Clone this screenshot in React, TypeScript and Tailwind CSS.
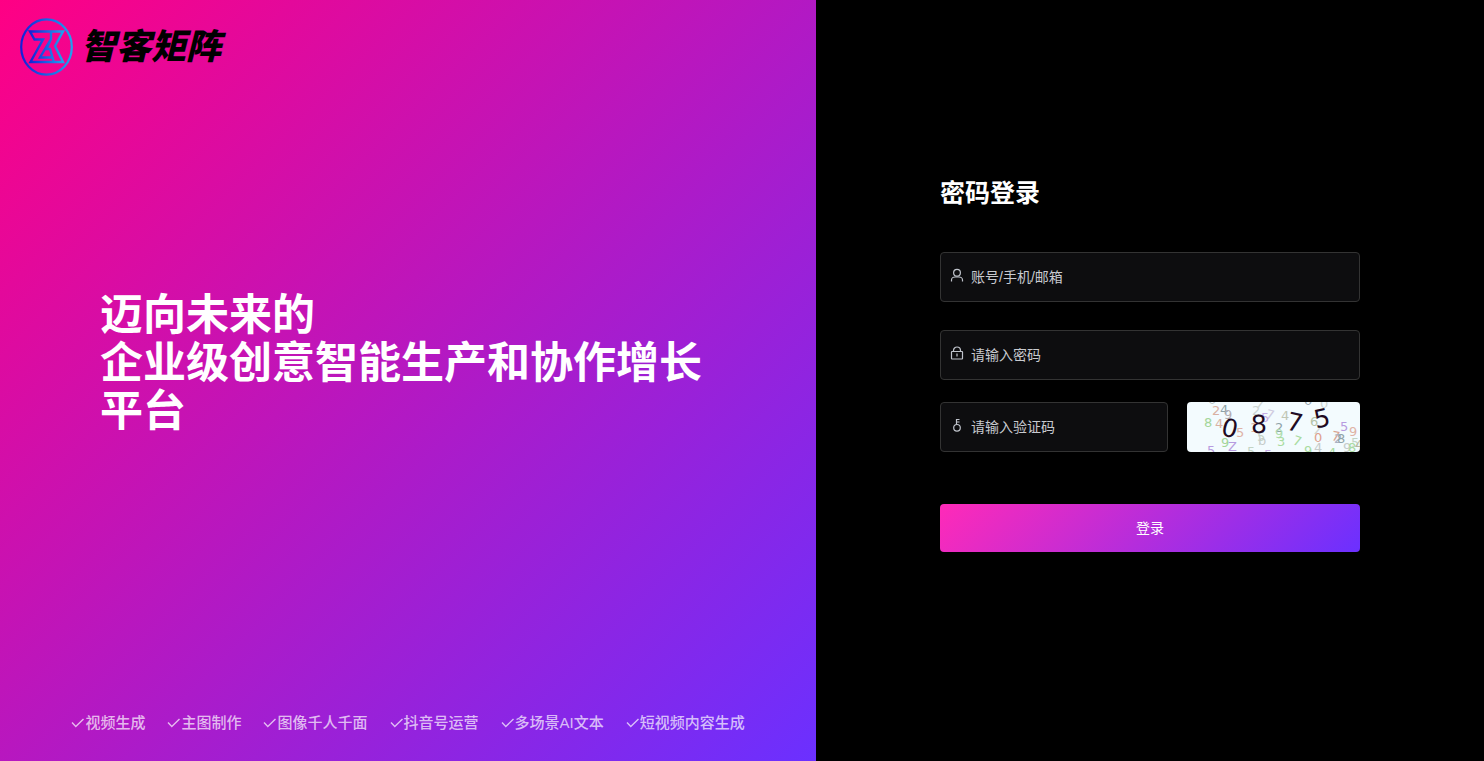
import type { InputHTMLAttributes, ReactNode } from "react";

type Glyph = { char: string; x: number; y: number; fill?: string; rotate?: number };

const FEATURES = [
  "视频生成",
  "主图制作",
  "图像千人千面",
  "抖音号运营",
  "多场景AI文本",
  "短视频内容生成",
];

const NOISE: Glyph[] = [
  { char: "0", x: 21, y: 2, fill: "#b9c4c6" },
  { char: "2", x: 25, y: 13, fill: "#d9b0a2" },
  { char: "4", x: 33, y: 12, fill: "#8fa3a8" },
  { char: "9", x: 37, y: 17, fill: "#b3aeb4" },
  { char: "8", x: 17, y: 25, fill: "#a3d69a" },
  { char: "4", x: 28, y: 26, fill: "#d9b0a2" },
  { char: "5", x: 49, y: 35, fill: "#dfb3a6" },
  { char: "9", x: 34, y: 45, fill: "#a3d69a" },
  { char: "Z", x: 41, y: 49, fill: "#b79be0" },
  { char: "5", x: 20, y: 53, fill: "#b79be0" },
  { char: "2", x: 65, y: 13, fill: "#c9d3d3" },
  { char: "7", x: 78, y: 16, fill: "#cfcbe0", rotate: 15 },
  { char: "5", x: 74, y: 20, fill: "#c6aee6" },
  { char: "7", x: 68, y: 5, fill: "#d0d6d3", rotate: 15 },
  { char: "1", x: 63, y: 30, fill: "#dfb3a6" },
  { char: "5", x: 70, y: 39, fill: "#c3d4c4" },
  { char: "b", x: 71, y: 43, fill: "#c6ccca" },
  { char: "2", x: 88, y: 30, fill: "#8fa3a8" },
  { char: "9", x: 88, y: 36, fill: "#b0deb0" },
  { char: "3", x: 90, y: 44, fill: "#a9dca0" },
  { char: "4", x: 94, y: 18, fill: "#c0c6b4" },
  { char: "7", x: 105, y: 42, fill: "#a9dca0", rotate: 18 },
  { char: "5", x: 60, y: 54, fill: "#c3d4c4" },
  { char: "5", x: 77, y: 57, fill: "#c6aee6" },
  { char: "9", x: 117, y: 53, fill: "#a9dca0" },
  { char: "4", x: 127, y: 50, fill: "#c6ccca" },
  { char: "6", x: 123, y: 24, fill: "#b4c3a6" },
  { char: "7", x: 125, y: 31, fill: "#d0d6d3", rotate: 18 },
  { char: "0", x: 117, y: 3, fill: "#9aa8b0" },
  { char: "0", x: 133, y: 6, fill: "#cdd5d3" },
  { char: "0", x: 127, y: 40, fill: "#dfa08c" },
  { char: "7", x: 144, y: 38, fill: "#d9a490", rotate: 10 },
  { char: "2", x: 147, y: 41, fill: "#aab2c4" },
  { char: "8", x: 150, y: 41, fill: "#8fa3a8" },
  { char: "5", x: 153, y: 29, fill: "#b79be0" },
  { char: "9", x: 162, y: 34, fill: "#dfb3a6" },
  { char: "4", x: 141, y: 55, fill: "#a9dca0" },
  { char: "9", x: 156, y: 50, fill: "#c6ccca" },
  { char: "8", x: 161, y: 50, fill: "#a9dca0" },
  { char: "5", x: 164, y: 45, fill: "#c3d4c4" },
  { char: "4", x: 168, y: 47, fill: "#b9b6a0" },
];

// x and y are the centre of each digit
const CODE: Glyph[] = [
  { char: "0", x: 43, y: 26, rotate: 14 },
  { char: "8", x: 72, y: 22, rotate: -2 },
  { char: "7", x: 108, y: 20, rotate: 12 },
  { char: "5", x: 135, y: 16, rotate: -12 },
];

function Logo() {
  return (
    <div className="flex items-center gap-2">
      <svg viewBox="0 0 53 58" className="h-[58px] w-[53px]" fill="none" aria-hidden="true">
        <defs>
          <linearGradient id="logo-ring" x1="0" y1="0" x2="1" y2="0">
            <stop offset="0" stopColor="#1420d8" />
            <stop offset="1" stopColor="#1fa2f0" />
          </linearGradient>
        </defs>
        <ellipse cx="26.5" cy="29" rx="25.3" ry="27.6" stroke="url(#logo-ring)" strokeWidth="2.2" />
        <path
          d="M10 13.5H43L35 28L43 44H10.5L23 21.5H14.5ZM31 14V21L20 39.500H32M31 21L26.500 31H30L33.500 43"
          stroke="url(#logo-ring)"
          strokeWidth="2.4"
        />
      </svg>
      <span className="text-[35px] leading-[48px] font-black text-black italic">智客矩阵</span>
    </div>
  );
}

function CheckIcon() {
  return (
    <svg viewBox="0 0 14 14" className="size-[14px]" fill="none" stroke="currentColor" aria-hidden="true">
      <path d="M1 6.5L4.8 10.5L12.5 3" strokeWidth="1.4" />
    </svg>
  );
}

function UserIcon() {
  return (
    <svg viewBox="0 0 14 14" className="mb-1 size-[14px]" fill="none" stroke="currentColor" strokeWidth="1.2" aria-hidden="true">
      <circle cx="7" cy="4.7" r="3.4" />
      <path d="M1.5 13.5V12C1.5 10 3.5 9 5 9H9C10.5 9 12.5 10 12.5 12V13.5" />
    </svg>
  );
}

function LockIcon() {
  return (
    <svg viewBox="0 0 14 14" className="mb-1 size-[14px]" fill="none" stroke="currentColor" strokeWidth="1.2" aria-hidden="true">
      <rect x="1.5" y="5.5" width="11" height="7.5" rx="0.5" />
      <path d="M3.5 5.5V4.5A3.5 3.5 0 0 1 10.5 4.5V5.5M7 7.5V10.5" />
    </svg>
  );
}

function KeyIcon() {
  return (
    <svg viewBox="0 0 14 14" className="mb-1 size-[14px]" fill="none" stroke="currentColor" strokeWidth="1.2" aria-hidden="true">
      <circle cx="7" cy="9.8" r="3.3" />
      <path d="M6.5 6.5V1.5H9.5M6.5 4H9.5" />
    </svg>
  );
}

function Captcha() {
  return (
    <svg viewBox="0 0 173 50" className="h-[50px] w-full" role="img" aria-label="验证码">
      <rect width="173" height="50" fill="#f3fbfe" />
      <g fontSize="13" className="font-['DejaVu_Sans',sans-serif]">
        {NOISE.map((g, i) => (
          <text key={i} x={g.x} y={g.y} fill={g.fill} transform={`rotate(${g.rotate ?? 0} ${g.x} ${g.y})`}>
            {g.char}
          </text>
        ))}
      </g>
      <g fontSize="25" fill="#210a22" textAnchor="middle" className="font-['DejaVu_Sans',sans-serif]">
        {CODE.map((g) => (
          <text key={g.char} x={g.x} y={g.y + 9} transform={`rotate(${g.rotate} ${g.x} ${g.y})`}>
            {g.char}
          </text>
        ))}
      </g>
    </svg>
  );
}

function Field(props: InputHTMLAttributes<HTMLInputElement> & { icon: ReactNode }) {
  const { icon, ...input } = props;
  return (
    <label className="flex h-[50px] items-center gap-[7px] rounded border border-[#333333] bg-[#0d0d0f] px-[9px] text-[#c0c4cc]">
      {icon}
      <input
        {...input}
        aria-label={input.placeholder}
        className="min-w-0 flex-1 bg-transparent text-sm text-white outline-none placeholder:text-[#c8cacf]"
      />
    </label>
  );
}

function Hero() {
  return (
    <section className="flex w-[55%] flex-col bg-[linear-gradient(135deg,#ff0084,#6b30ff)]">
      <header className="flex h-[94px] items-center px-5">
        <Logo />
      </header>
      <div className="flex flex-1 items-center px-[100px] pb-[54px]">
        <h1 className="text-[43px] leading-[48px] font-bold text-white">
          迈向未来的
          <br />
          企业级创意智能生产和协作增长平台
        </h1>
      </div>
      <ul className="flex h-[76px] items-center justify-center gap-[22px] text-[15px] leading-[22px] font-medium text-white/70">
        {FEATURES.map((feature) => (
          <li key={feature} className="flex items-center whitespace-nowrap">
            <CheckIcon />
            {feature}
          </li>
        ))}
      </ul>
    </section>
  );
}

function LoginForm() {
  return (
    <form className="w-[420px]" onSubmit={(e) => e.preventDefault()}>
      <h2 className="text-[25px] leading-8 font-bold text-white">密码登录</h2>
      <div className="mt-[43px] grid gap-7">
        <Field icon={<UserIcon />} name="account" type="text" placeholder="账号/手机/邮箱" />
        <Field icon={<LockIcon />} name="password" type="password" placeholder="请输入密码" />
      </div>
      <div className="mt-[22px] grid grid-cols-[228px_1fr] gap-[19px]">
        <Field icon={<KeyIcon />} name="captcha" type="text" placeholder="请输入验证码" />
        <button type="button" aria-label="刷新验证码" className="overflow-hidden rounded">
          <Captcha />
        </button>
      </div>
      <button
        type="submit"
        className="mt-[52px] h-12 w-full rounded bg-[linear-gradient(135deg,#ff2ab8,#6b30ff)] text-sm text-white"
      >
        登录
      </button>
    </form>
  );
}

export default function App() {
  return (
    <main className="flex min-h-screen bg-black font-['Liberation_Sans','Noto_Sans_CJK_SC',sans-serif]">
      <Hero />
      <section className="flex flex-1 items-center justify-center pb-8">
        <LoginForm />
      </section>
    </main>
  );
}
